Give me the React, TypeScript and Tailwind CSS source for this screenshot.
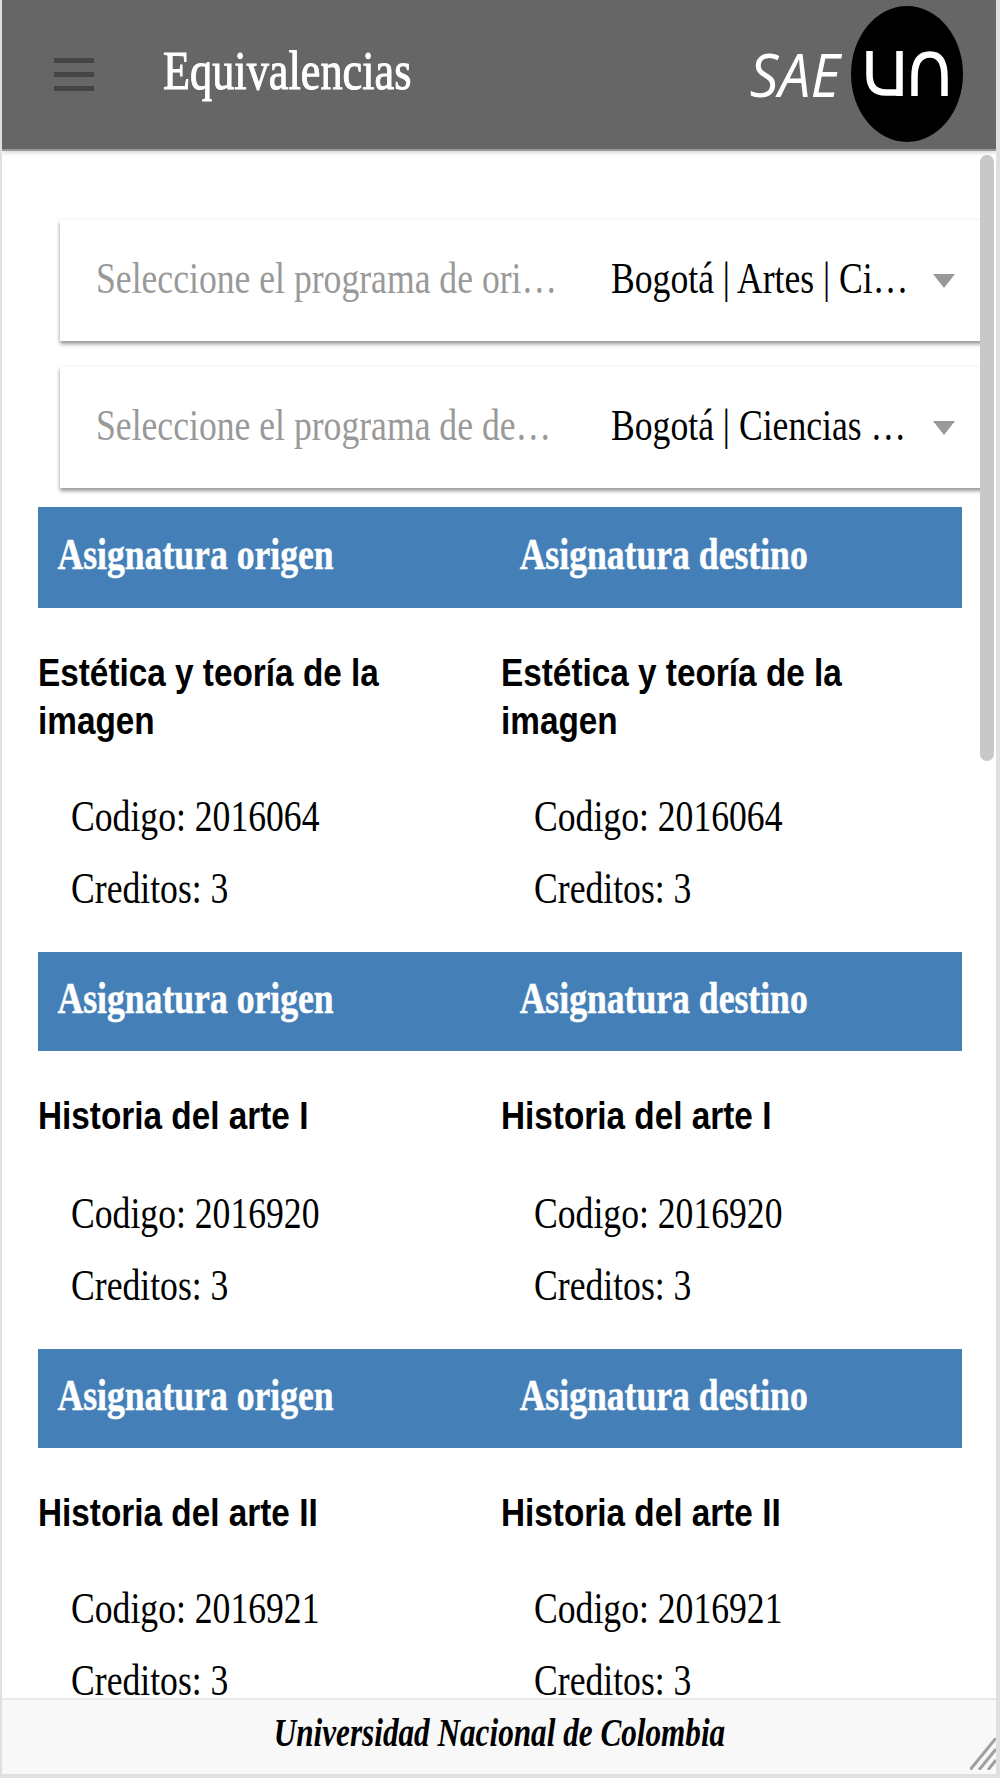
function Band({ tall }: { tall?: boolean }) {
  return (
    <div className={`ml-[36px] mr-[34px] ${tall ? "h-[101px]" : "h-[99px]"} bg-[#447fb8] grid grid-cols-[463px_1fr] items-center text-white font-bold text-[44px] leading-none font-['Liberation_Serif',serif] [-webkit-text-stroke:0.5px_white]`}>
      <span className="pl-[24px] pb-[6px] whitespace-nowrap origin-left scale-x-[0.81]">Asignatura origen</span>
      <span className="pl-[23px] pb-[6px] whitespace-nowrap origin-left scale-x-[0.81]">Asignatura destino</span>
    </div>
  );
}

function Col({ title, code, wide }: { title: string[]; code: string; wide?: boolean }) {
  return (
    <div>
      <div className="font-['Liberation_Sans',sans-serif] font-bold text-[38px] leading-[48px] text-black">
        {title.map((t) => (
          <div key={t} className="whitespace-nowrap origin-left scale-x-[0.877]">{t}</div>
        ))}
      </div>
      <div className={`${wide ? "mt-[38px]" : "mt-[36px]"} pl-[33px] font-['Liberation_Serif',serif] text-[44px] leading-[72px] text-black`}>
        <div className="whitespace-nowrap origin-left scale-x-[0.81]">Codigo: {code}</div>
        <div className="whitespace-nowrap origin-left scale-x-[0.81]">Creditos: 3</div>
      </div>
    </div>
  );
}

function Section({ title, code, tall, wide }: { title: string[]; code: string; tall?: boolean; wide?: boolean }) {
  return (
    <section>
      <Band tall={tall} />
      <div className={`mx-[36px] pt-[41px] ${wide || tall ? "pb-[27px]" : "pb-[28px]"} grid grid-cols-[463px_1fr]`}>
        <Col title={title} code={code} wide={wide} />
        <Col title={title} code={code} wide={wide} />
      </div>
    </section>
  );
}

function Select({ placeholder, value }: { placeholder: string; value: string }) {
  return (
    <div className="ml-[58px] mr-[9px] h-[121px] bg-white shadow-[0_3px_4px_rgba(0,0,0,0.4),0_0_4px_rgba(0,0,0,0.05)] flex items-center font-['Liberation_Serif',serif] text-[44px] leading-none">
      <span className="ml-[36px] w-[515px] pb-[4px] text-[#999999] whitespace-nowrap origin-left scale-x-[0.81]">{placeholder}</span>
      <span className="w-[322px] pb-[4px] text-black whitespace-nowrap origin-left scale-x-[0.81]">{value}</span>
      <span className="w-0 h-0 border-x-[11px] border-x-transparent border-t-[14px] border-t-[#999999]" />
    </div>
  );
}

export default function App() {
  return (
    <div className="w-[1000px] h-[1778px] bg-white border-l-[2px] border-b-[4px] border-r-[4px] border-[#e0e0e0] flex flex-col overflow-hidden relative">
      <header className="h-[151px] shrink-0 bg-[#666666] border-b-[2px] border-[#999999] shadow-[0_2px_4px_rgba(0,0,0,0.15)] flex items-center relative z-10">
        <div className="ml-[52px] w-[40px] flex flex-col gap-[9px]">
          <div className="h-[5px] bg-[#444444]" />
          <div className="h-[5px] bg-[#444444]" />
          <div className="h-[5px] bg-[#444444]" />
        </div>
        <h1 className="ml-[69px] mb-[8px] font-['Liberation_Serif',serif] text-[54px] leading-none text-white whitespace-nowrap origin-left scale-x-[0.82] [-webkit-text-stroke:1px_white]">
          Equivalencias
        </h1>
        <span className="ml-auto font-['Open_Sans',sans-serif] italic text-[60px] leading-none text-white whitespace-nowrap origin-right scale-x-[0.95] mr-[11px] mb-[2px]">SAE</span>
        <svg width="113" height="136" viewBox="850 7 113 136" className="mr-[32px] mb-[1px] shrink-0">
          <ellipse cx="906" cy="75" rx="56" ry="68" fill="#000" />
          <path d="M868.5 52 V76 Q868.5 93.5 885 93.5 H898.5 M898.5 52 V97 M913.5 97 V78 Q913.5 55.5 929 55.5 Q943.5 55.5 943.5 78 V97" fill="none" stroke="#fff" strokeWidth="6.5" />
        </svg>
      </header>
      <main className="flex-1 min-h-0 overflow-hidden pt-[69px] relative">
        <div className="flex flex-col gap-[26px]">
          <Select placeholder="Seleccione el programa de ori…" value="Bogotá | Artes | Ci…" />
          <Select placeholder="Seleccione el programa de de…" value="Bogotá | Ciencias …" />
        </div>
        <div className="mt-[19px]">
          <Section tall title={["Estética y teoría de la", "imagen"]} code="2016064" />
          <Section wide title={["Historia del arte I"]} code="2016920" />
          <Section title={["Historia del arte II"]} code="2016921" />
        </div>
        <div className="absolute right-[2px] top-[4px] w-[14px] h-[606px] rounded-full bg-[#c8c8c8]" />
      </main>
      <footer className="h-[76px] shrink-0 bg-[#f8f8f8] border-t-[2px] border-[#e9e9e9] flex items-center justify-center relative z-10 font-['Liberation_Serif',serif] italic font-bold text-[40px] leading-none text-black">
        <span className="whitespace-nowrap scale-x-[0.78] pb-[8px]">Universidad Nacional de Colombia</span>
        <svg width="26" height="32" viewBox="0 0 26 32" className="absolute right-0 bottom-[4px]" stroke="#a0a0a0" strokeWidth="3">
          <path d="M0 32 L26 0 M9 32 L26 11 M18 32 L26 22" fill="none" />
        </svg>
      </footer>
    </div>
  );
}
